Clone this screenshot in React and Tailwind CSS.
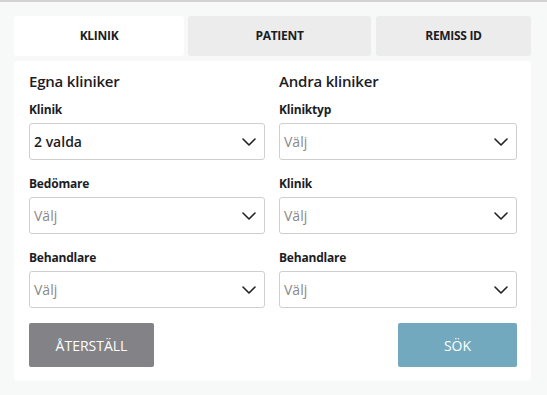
import React from "react";

function Chevron() {
  return (
    <svg width="14" height="8" viewBox="0 0 14 8" fill="none" className="shrink-0">
      <path d="M1 1l6 6 6-6" stroke="#222" strokeWidth="1.6" strokeLinecap="round" strokeLinejoin="round" />
    </svg>
  );
}

function Field({ label, value, placeholder, first }) {
  return (
    <div className={first ? "" : "mt-4"}>
      <div className="h-4 leading-4 text-[12px] font-bold text-[#1c1c24] tracking-[-0.2px]">{label}</div>
      <div className="mt-[5px] h-[37px] rounded-[3px] border border-[#cfcfcf] bg-white flex items-center justify-between pl-[4px] pr-[8px]">
        {value ? (
          <span className="text-[14px] font-semibold text-[#1c1c24]">{value}</span>
        ) : (
          <span className="text-[14px] text-[#8a8a8a]">{placeholder}</span>
        )}
        <Chevron />
      </div>
    </div>
  );
}

export default function App() {
  return (
    <div
      className="w-[547px] h-[395px] bg-[#f7f8f8] border-t-2 border-[#d2d2d2] overflow-hidden"
      style={{ fontFamily: '"Open Sans", "Noto Sans", sans-serif' }}
    >
      <div className="pl-[14px] pt-[14px]">
        <div className="flex h-10">
          <div className="w-[170px] rounded-t-[3px] rounded-b-[3px] bg-white flex items-center justify-center text-[12px] font-bold text-[#1c1c24] tracking-[-0.3px]">
            KLINIK
          </div>
          <div className="ml-[4px] w-[183px] rounded-[3px] bg-[#ececec] flex items-center justify-center text-[12px] font-bold text-[#1c1c24] tracking-[-0.3px]">
            PATIENT
          </div>
          <div className="ml-[5px] w-[155px] rounded-[3px] bg-[#ececec] flex items-center justify-center text-[12px] font-bold text-[#1c1c24] tracking-[-0.3px]">
            REMISS ID
          </div>
        </div>
        <div className="mt-[5px] w-[517px] rounded-[4px] bg-white pl-[15px] pr-[14px] pt-[10px] pb-[14px]">
          <div className="grid grid-cols-[236px_238px] gap-x-[14px]">
            <div>
              <div className="h-5 leading-5 text-[15px] font-semibold text-[#1c1c24] tracking-[-0.2px]">Egna kliniker</div>
              <div className="mt-[11px]">
                <Field first label="Klinik" value="2 valda" />
                <Field label="Bedömare" placeholder="Välj" />
                <Field label="Behandlare" placeholder="Välj" />
              </div>
            </div>
            <div>
              <div className="h-5 leading-5 text-[15px] font-semibold text-[#1c1c24] tracking-[-0.2px]">Andra kliniker</div>
              <div className="mt-[11px]">
                <Field first label="Kliniktyp" placeholder="Välj" />
                <Field label="Klinik" placeholder="Välj" />
                <Field label="Behandlare" placeholder="Välj" />
              </div>
            </div>
          </div>
          <div className="mt-[15px] flex justify-between">
            <button className="w-[125px] h-[44px] rounded-[2px] bg-[#838387] text-white text-[14px]">ÅTERSTÄLL</button>
            <button className="w-[119px] h-[44px] rounded-[2px] bg-[#73a9be] text-white text-[14px]">SÖK</button>
          </div>
        </div>
      </div>
    </div>
  );
}
